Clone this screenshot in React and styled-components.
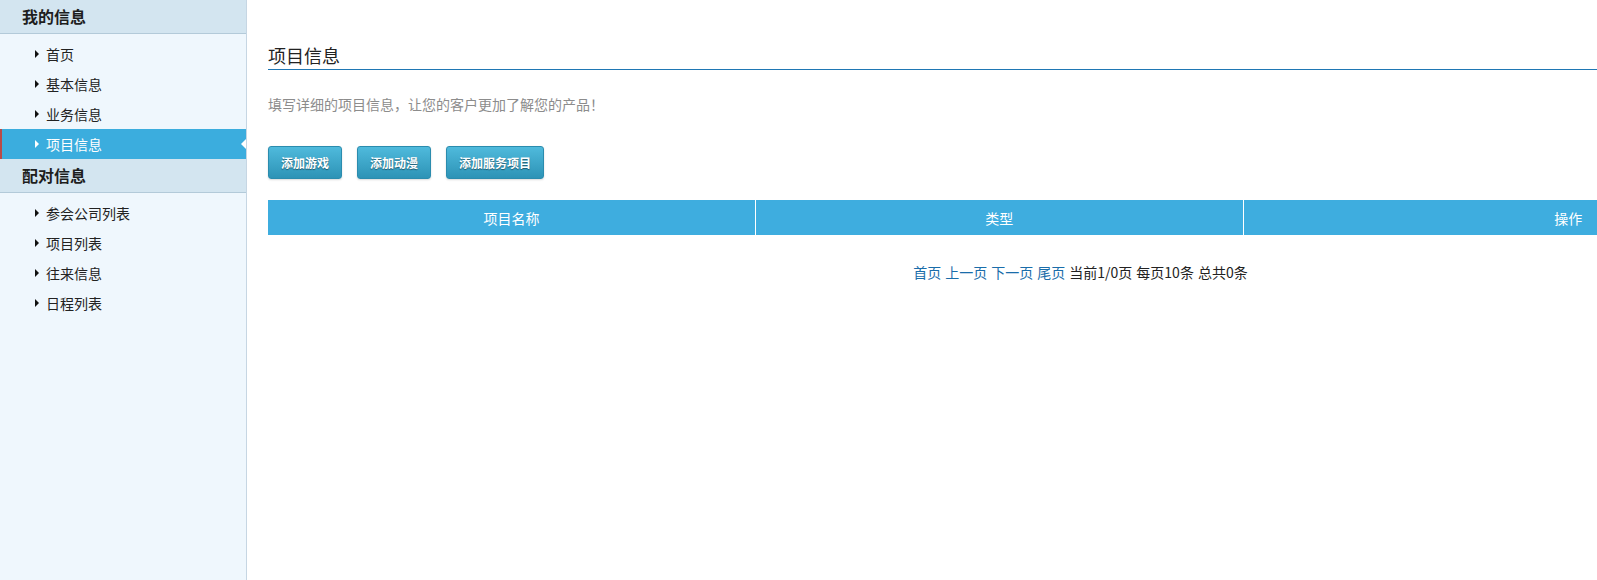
import React from "react";
import styled, { createGlobalStyle } from "styled-components";

const GlobalStyle = createGlobalStyle`
  html, body {
    margin: 0;
    padding: 0;
    overflow: hidden;
    background: #ffffff;
    font-family: "Noto Sans CJK SC", "Noto Sans", sans-serif;
  }
  * { box-sizing: border-box; }
`;

const Layout = styled.div`
  display: flex;
  width: 100vw;
  min-height: 100vh;
  overflow: hidden;
`;

const Sidebar = styled.aside`
  flex: 0 0 247px;
  width: 247px;
  background: #eff7fd;
  border-right: 1px solid #c6d6e3;
`;

const GroupTitle = styled.div`
  height: 34px;
  line-height: 33px;
  padding-left: 22px;
  background: #d3e5f0;
  border-bottom: 1px solid #b3cad9;
  font-size: 16px;
  font-weight: bold;
  color: #1e1e1e;
`;

const MenuList = styled.ul`
  list-style: none;
  margin: 0;
  padding: 5px 0 0;
`;

const MenuItem = styled.li`
  position: relative;
  height: 30px;
  line-height: 30px;
  padding-left: 44px;
  font-size: 14px;
  color: ${(p) => (p.$active ? "#ffffff" : "#222222")};
  background: ${(p) => (p.$active ? "#3badde" : "transparent")};
  border-left: 2px solid ${(p) => (p.$active ? "#b94a48" : "transparent")};
  cursor: pointer;

  &::before {
    content: "";
    position: absolute;
    left: 33px;
    top: 11px;
    border-top: 4px solid transparent;
    border-bottom: 4px solid transparent;
    border-left: 4px solid ${(p) => (p.$active ? "#ffffff" : "#111111")};
  }
`;

const Notch = styled.span`
  position: absolute;
  right: 0;
  top: 10px;
  border-top: 5px solid transparent;
  border-bottom: 5px solid transparent;
  border-right: 5px solid #ffffff;
`;

const Main = styled.main`
  flex: 0 0 auto;
  width: 1625px;
  margin-left: 21px;
  padding-top: 43px;
`;

const PageTitle = styled.h2`
  margin: 0;
  font-size: 18px;
  font-weight: normal;
  line-height: 24px;
  padding-bottom: 2px;
  color: #222;
  border-bottom: 1px solid #1f77b4;
`;

const Desc = styled.p`
  margin: 24px 0 0;
  font-size: 14px;
  line-height: 20px;
  color: #8c8c8c;
`;

const ButtonRow = styled.div`
  display: flex;
  gap: 15px;
  margin-top: 32px;
`;

const ActionButton = styled.button`
  height: 33px;
  padding: 0 12px;
  border: 1px solid #2b8cae;
  border-radius: 3px;
  background: linear-gradient(to bottom, #4fbadc 0%, #2d93b6 100%);
  color: #ffffff;
  font-family: inherit;
  font-size: 12px;
  font-weight: bold;
  text-shadow: 0 1px 1px rgba(0, 0, 0, 0.45);
  box-shadow: 0 1px 2px rgba(0, 0, 0, 0.15);
  cursor: pointer;
`;

const Table = styled.table`
  width: 100%;
  margin-top: 21px;
  border-collapse: collapse;
  table-layout: fixed;
`;

const Th = styled.th`
  width: ${(p) => p.$w};
  height: 35px;
  padding: 0;
  background: #3eaddf;
  color: #ffffff;
  font-size: 14px;
  font-weight: normal;
  text-align: center;
  border-left: 1px solid #ffffff;
  &:first-child { border-left: none; }
`;

const Pager = styled.div`
  margin-top: 27px;
  text-align: center;
  font-size: 14px;
  line-height: 20px;
  color: #222;
`;

const PagerLink = styled.a`
  color: #1a6daa;
  text-decoration: none;
  margin-right: 4px;
  cursor: pointer;
`;

const PagerText = styled.span`
  margin-right: 4px;
`;

const groups = [
  {
    title: "我的信息",
    items: ["首页", "基本信息", "业务信息", "项目信息"],
    active: "项目信息",
  },
  {
    title: "配对信息",
    items: ["参会公司列表", "项目列表", "往来信息", "日程列表"],
  },
];

export default function App() {
  return (
    <>
      <GlobalStyle />
      <Layout>
        <Sidebar>
          {groups.map((g) => (
            <div key={g.title}>
              <GroupTitle>{g.title}</GroupTitle>
              <MenuList>
                {g.items.map((it) => (
                  <MenuItem key={it} $active={g.active === it}>
                    {it}
                    {g.active === it && <Notch />}
                  </MenuItem>
                ))}
              </MenuList>
            </div>
          ))}
        </Sidebar>
        <Main>
          <PageTitle>项目信息</PageTitle>
          <Desc>填写详细的项目信息，让您的客户更加了解您的产品！</Desc>
          <ButtonRow>
            <ActionButton>添加游戏</ActionButton>
            <ActionButton>添加动漫</ActionButton>
            <ActionButton>添加服务项目</ActionButton>
          </ButtonRow>
          <Table>
            <thead>
              <tr>
                <Th $w="30%">项目名称</Th>
                <Th $w="30%">类型</Th>
                <Th $w="40%">操作</Th>
              </tr>
            </thead>
          </Table>
          <Pager>
            <PagerLink>首页</PagerLink>
            <PagerLink>上一页</PagerLink>
            <PagerLink>下一页</PagerLink>
            <PagerLink>尾页</PagerLink>
            <PagerText>当前1/0页</PagerText>
            <PagerText>每页10条</PagerText>
            <span>总共0条</span>
          </Pager>
        </Main>
      </Layout>
    </>
  );
}
